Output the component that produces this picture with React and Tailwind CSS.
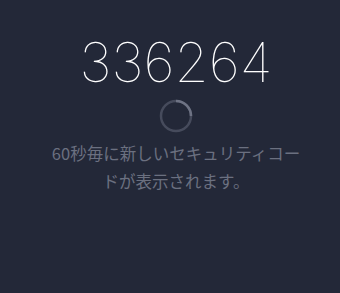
export default function App() {
  return (
    <div className="w-[340px] h-[293px] bg-[#232838] flex flex-col items-center pl-[12px] pt-[30px] font-['Noto_Sans','Noto_Sans_CJK_JP',sans-serif]">
      <div className="text-[55px] leading-[64px] text-white font-thin font-['Inter',sans-serif]">
        336264
      </div>
      <svg className="mt-[5px]" width="34" height="34" viewBox="0 0 34 34">
        <circle cx="17" cy="17" r="15" fill="none" stroke="#464b5c" strokeWidth="2.5" />
        <path d="M17 2 A15 15 0 0 1 32 17" fill="none" stroke="#6e7384" strokeWidth="2.5" />
      </svg>
      <p className="mt-[6px] w-[256px] text-center text-[16.5px] leading-[28px] text-[#6b7080] font-['Noto_Sans_CJK_JP',sans-serif]">
        60秒毎に新しいセキュリティコードが表示されます。
      </p>
    </div>
  );
}
